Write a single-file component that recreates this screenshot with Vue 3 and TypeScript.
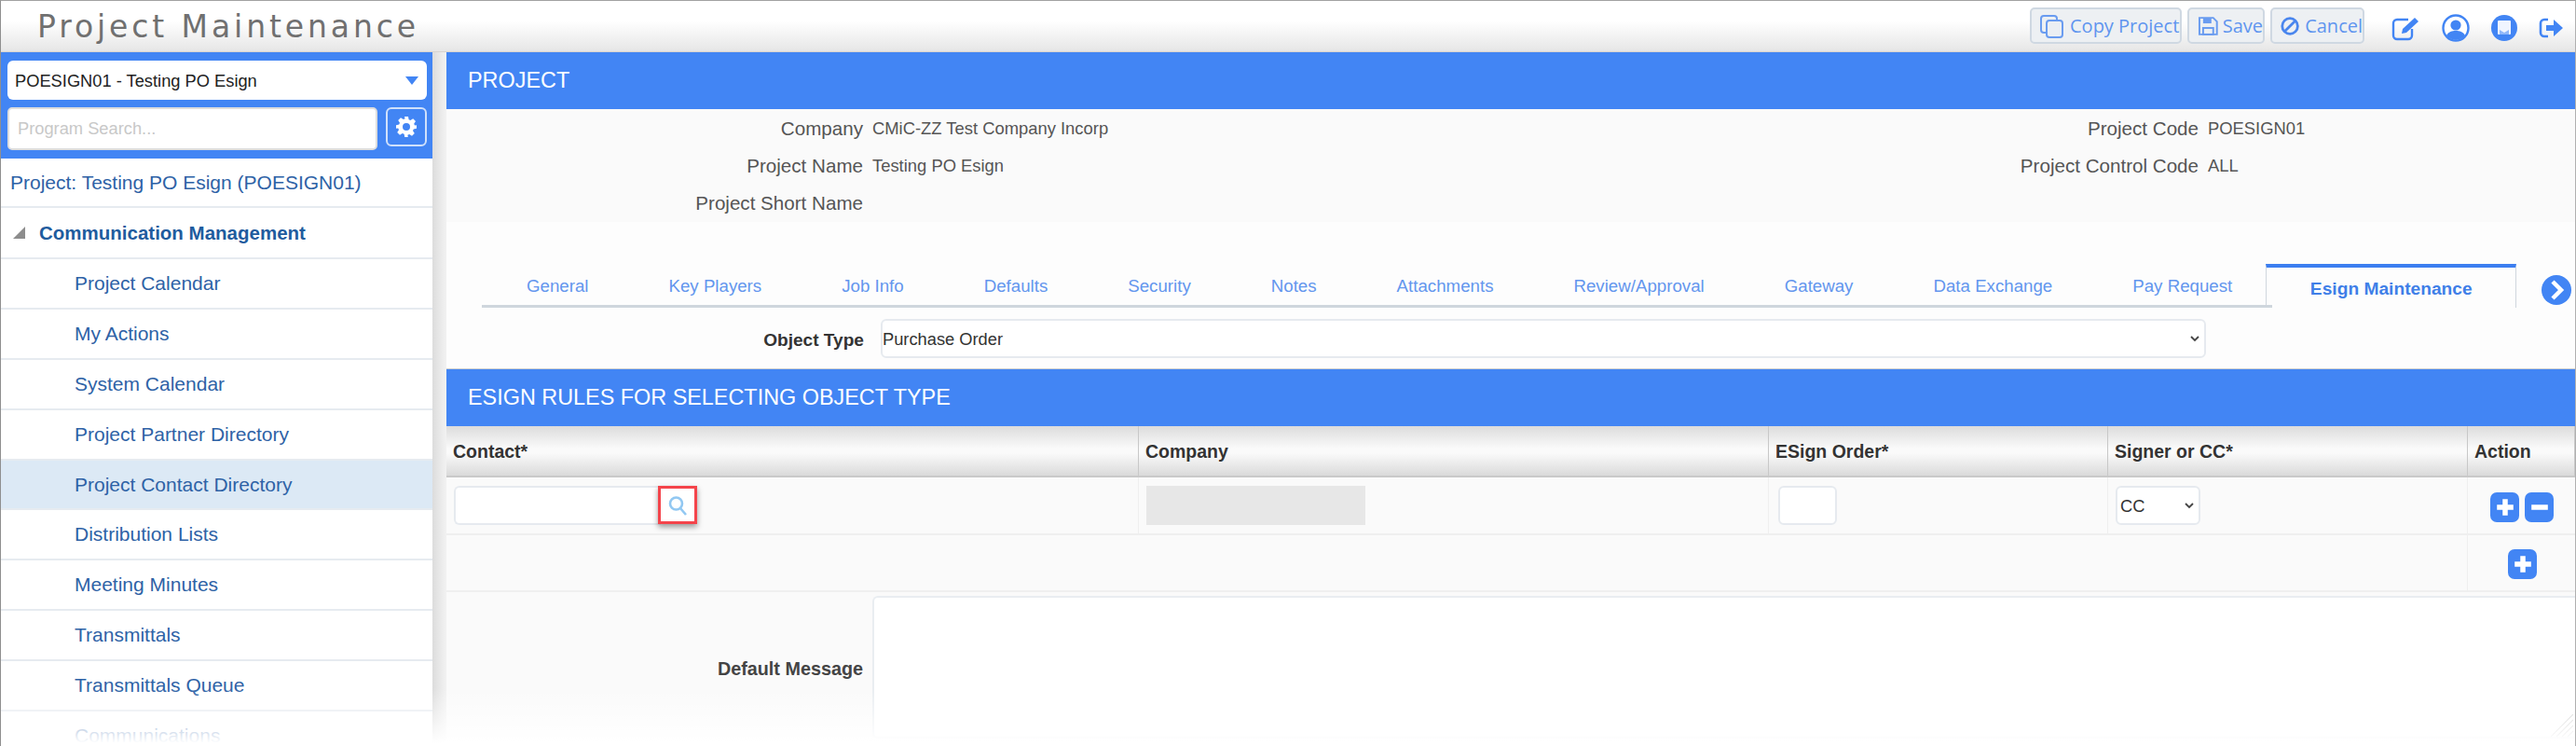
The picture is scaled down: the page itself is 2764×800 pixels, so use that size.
<script setup lang="ts">
interface Field { label: string; value: string }
const navItems: string[] = [
  'Project Calendar', 'My Actions', 'System Calendar', 'Project Partner Directory',
  'Project Contact Directory', 'Distribution Lists', 'Meeting Minutes', 'Transmittals',
  'Transmittals Queue', 'Communications'
]
const tabs: string[] = [
  'General', 'Key Players', 'Job Info', 'Defaults', 'Security', 'Notes', 'Attachments',
  'Review/Approval', 'Gateway', 'Data Exchange', 'Pay Request'
]
const left: Field[] = [
  { label: 'Company', value: 'CMiC-ZZ Test Company Incorp' },
  { label: 'Project Name', value: 'Testing PO Esign' },
  { label: 'Project Short Name', value: '' }
]
const right: Field[] = [
  { label: 'Project Code', value: 'POESIGN01' },
  { label: 'Project Control Code', value: 'ALL' },
  { label: '', value: '' }
]
const infoRows = left.map((f, i) => ({ a: f, b: right[i] }))
const columns: string[] = ['Contact*', 'Company', 'ESign Order*', 'Signer or CC*', 'Action']
</script>

<template>
  <div class="app">
    <header class="topbar">
      <h1 class="title">Project Maintenance</h1>
      <div class="actions">
        <button class="btn copy">
          <svg width="28" height="28" viewBox="0 0 28 28" fill="none" stroke="#6a9cf0" stroke-width="2"><rect x="2" y="3" width="17" height="18" rx="3"/><rect x="8" y="8" width="17" height="18" rx="3" fill="#eceff3"/></svg>
          Copy Project
        </button>
        <button class="btn save">
          <svg width="24" height="24" viewBox="0 0 24 24" fill="none" stroke="#6a9cf0" stroke-width="2"><path d="M3 3h15l4 4v14H3z"/><rect x="7" y="3" width="9" height="6" fill="#6a9cf0" stroke="none"/><rect x="7" y="14" width="11" height="7"/></svg>
          Save
        </button>
        <button class="btn cancel">
          <svg width="24" height="24" viewBox="0 0 24 24" fill="none" stroke="#4a86ee" stroke-width="3"><circle cx="12" cy="12" r="9"/><path d="M6 18 18 6"/></svg>
          Cancel
        </button>
        <div class="tools">
          <svg width="32" height="28" viewBox="0 0 32 28" fill="none" stroke="#4285f4" stroke-width="2.4"><path d="M22 15v7a4 4 0 0 1-4 4H6a4 4 0 0 1-4-4V9a4 4 0 0 1 4-4h12"/><path d="M11 20l1-5L25 3l4 4-13 12z" fill="#4285f4" stroke="none"/></svg>
          <svg width="30" height="30" viewBox="0 0 30 30"><circle cx="15" cy="15" r="13.5" fill="#fff" stroke="#4285f4" stroke-width="2.4"/><circle cx="15" cy="12" r="5.6" fill="#4285f4"/><path d="M5 23c2-4 6-5 10-5s8 1 10 5a13 13 0 0 1-20 0z" fill="#4285f4"/></svg>
          <svg width="30" height="30" viewBox="0 0 30 30"><circle cx="15" cy="15" r="14" fill="#4285f4"/><rect x="8" y="7" width="14" height="15" rx="1" fill="#fff" opacity=".92"/><path d="M10 17l5 3 5-3v5H10z" fill="#4285f4" opacity=".55"/></svg>
          <svg width="28" height="24" viewBox="0 0 28 24"><path d="M10 3H6a4 4 0 0 0-4 4v10a4 4 0 0 0 4 4h4" fill="none" stroke="#4285f4" stroke-width="2.6"/><path d="M8 9h8V3l10 9-10 9v-6H8z" fill="#4285f4"/></svg>
        </div>
      </div>
    </header>

    <div class="body">
      <aside class="sidebar">
        <div class="side-top">
          <div class="project-select">
            <select class="plain-select">
              <option>POESIGN01 - Testing PO Esign</option>
            </select>
            <svg class="caret" width="14" height="9" viewBox="0 0 14 9"><path d="M0 0h14L7 9z" fill="#4285f4"/></svg>
          </div>
          <div class="search-row">
            <input class="search" placeholder="Program Search..." />
            <button class="gear" aria-label="Settings">
              <svg width="24" height="24" viewBox="0 0 24 24"><path fill-rule="evenodd" fill="#fff" d="M10 1h4l.6 3.2 1.8.8 2.8-1.8 2.8 2.8-1.8 2.8.8 1.8L23 10.200v3.600l-3.200.6-.8 1.800 1.800 2.800-2.800 2.800-2.800-1.800-1.800.8L13.800 23h-3.600l-.6-3.200-1.800-.8-2.800 1.800-2.800-2.800 1.800-2.800-.8-1.800L1 13.800v-3.600l3.200-.6.8-1.800-1.800-2.800 2.800-2.800 2.800 1.800 1.800-.8zM12 8a4 4 0 1 0 0 8 4 4 0 0 0 0-8z"/></svg>
            </button>
          </div>
        </div>
        <nav class="nav">
          <div class="nav-project">Project: Testing PO Esign (POESIGN01)</div>
          <div class="nav-group">
            <svg width="13" height="13" viewBox="0 0 13 13"><path d="M13 0v13H0z" fill="#8d8d8d"/></svg>
            Communication Management
          </div>
          <div
            v-for="item in navItems"
            :key="item"
            class="nav-item"
            :class="{ selected: item === 'Project Contact Directory' }"
          >{{ item }}</div>
        </nav>
      </aside>

      <div class="gutter"></div>

      <main class="main">
        <div class="bar">PROJECT</div>

        <section class="info">
          <template v-for="row in infoRows" :key="row.a.label">
            <div class="lbl">{{ row.a.label }}</div>
            <div class="val">{{ row.a.value }}</div>
            <div class="lbl">{{ row.b.label }}</div>
            <div class="val">{{ row.b.value }}</div>
          </template>
        </section>

        <div class="tabs-wrap">
          <div class="tabs">
            <a v-for="t in tabs" :key="t" class="tab">{{ t }}</a>
            <a class="tab active">Esign Maintenance</a>
          </div>
          <svg class="next" width="32" height="32" viewBox="0 0 32 32"><circle cx="16" cy="16" r="16" fill="#4285f4"/><path d="M12 7l9 9-9 9" fill="none" stroke="#fff" stroke-width="4.500"/></svg>
        </div>

        <div class="object-row">
          <label class="obj-label">Object Type</label>
          <div class="obj-field">
            <select class="plain-select boxed">
              <option>Purchase Order</option>
            </select>
            <svg class="chev" width="10" height="7" viewBox="0 0 10 7"><path d="M1 1l4 4 4-4" fill="none" stroke="#444" stroke-width="1.800"/></svg>
          </div>
        </div>

        <div class="bar second">ESIGN RULES FOR SELECTING OBJECT TYPE</div>

        <div class="table">
          <div v-for="c in columns" :key="c" class="th">{{ c }}</div>

          <div class="td">
            <div class="contact">
              <input class="input contact-input" />
              <button class="lookup" aria-label="Search contact">
                <svg width="22" height="24" viewBox="0 0 22 24" fill="none" stroke="#92c8f2" stroke-width="2.600"><circle cx="9.500" cy="10" r="6.500"/><path d="M14 15l6 7"/></svg>
              </button>
            </div>
          </div>
          <div class="td"><div class="disabled"></div></div>
          <div class="td"><input class="input order" /></div>
          <div class="td">
            <div class="cc-field">
              <select class="plain-select boxed cc">
                <option>CC</option>
              </select>
              <svg class="chev" width="10" height="7" viewBox="0 0 10 7"><path d="M1 1l4 4 4-4" fill="none" stroke="#444" stroke-width="1.800"/></svg>
            </div>
          </div>
          <div class="td action">
            <button class="sq" aria-label="Add"><svg width="22" height="22" viewBox="0 0 20 20"><path d="M7.500 2h5v5.500H18v5h-5.500V18h-5v-5.500H2v-5h5.500z" fill="#fff"/></svg></button>
            <button class="sq" aria-label="Remove"><svg width="22" height="22" viewBox="0 0 20 20"><rect x="2" y="7.500" width="16" height="5" fill="#fff"/></svg></button>
          </div>

          <div class="td span4"></div>
          <div class="td action last">
            <button class="sq" aria-label="Add row"><svg width="22" height="22" viewBox="0 0 20 20"><path d="M7.500 2h5v5.500H18v5h-5.500V18h-5v-5.500H2v-5h5.500z" fill="#fff"/></svg></button>
          </div>
        </div>

        <div class="message">
          <label class="msg-label">Default Message</label>
          <div class="msg-box">
            <textarea class="msg-input"></textarea>
            <svg class="grip" width="24" height="24" viewBox="0 0 24 24" stroke="#c9c9c9" stroke-width="1.200"><path d="M24 0 0 24M24 6 6 24M24 12 12 24M24 18l-6 6"/></svg>
          </div>
        </div>
      </main>
    </div>

    <div class="fade"></div>
  </div>
</template>

<style>
html, body { margin: 0; background: #fff; }
</style>

<style scoped>
* { box-sizing: border-box; }
.app {
  position: relative;
  width: 2764px;
  height: 800px;
  overflow: hidden;
  display: flex;
  flex-direction: column;
  font-family: "Liberation Sans", Arial, sans-serif;
  border-top: 1px solid #a2a2a2;
  border-left: 1px solid #8f8f8f;
  border-right: 1px solid #b0b0b0;
  background: #fdfdfd;
}
.topbar {
  height: 55px;
  flex: none;
  display: flex;
  align-items: flex-start;
  justify-content: space-between;
  padding: 0 0 0 39px;
  background: linear-gradient(#fff 0%, #fff 40%, #e6e6e6 100%);
  border-bottom: 1px solid #d8d4d0;
}
.title {
  margin: 9px 0 0;
  font-family: "DejaVu Sans", sans-serif;
  font-weight: 400;
  font-size: 33px;
  line-height: 38px;
  letter-spacing: 3.9px;
  color: #707070;
}
.actions {
  display: flex;
  align-items: flex-start;
  gap: 6px;
  padding: 7px 11px 0 0;
}
.btn {
  height: 39px;
  display: flex;
  align-items: center;
  gap: 6px;
  padding: 0 0 0 8px;
  background: #edf0f3;
  border: 2px solid #cfd8e2;
  border-radius: 5px;
  color: #5f95ef;
  font-family: "Open Sans", sans-serif;
  font-size: 20px;
  white-space: nowrap;
}
.copy { width: 163px; gap: 5px; }
.save { width: 83px; gap: 4px; }
.cancel { width: 101px; gap: 5px; }
.tools {
  display: flex;
  align-items: center;
  gap: 22px;
  margin: 7px 0 0 23px;
}
.body {
  flex: 1;
  min-height: 0;
  display: flex;
}
.sidebar {
  width: 463px;
  flex: none;
  display: flex;
  flex-direction: column;
  background: #fff;
}
.side-top {
  height: 114px;
  flex: none;
  background: #4285f4;
  padding: 9px 6px 0 7px;
  display: flex;
  flex-direction: column;
  gap: 8px;
}
.project-select {
  position: relative;
  height: 42px;
  flex: none;
  background: #fff;
  border-radius: 6px;
}
.plain-select {
  appearance: none;
  width: 100%;
  height: 100%;
  border: 0;
  outline: 0;
  background: transparent;
  font-family: "Liberation Sans", Arial, sans-serif;
  font-size: 18.300px;
  color: #222;
  padding: 0 8px;
}
.caret {
  position: absolute;
  right: 9px;
  top: 17px;
}
.search-row {
  display: flex;
  gap: 9px;
  align-items: flex-start;
  flex: none;
}
.search {
  width: 397px;
  height: 46px;
  border: 2px solid #ddd;
  border-radius: 5px;
  padding: 0 9px;
  font-family: "Liberation Sans", Arial, sans-serif;
  font-size: 18.300px;
  background: #fff;
  outline: 0;
}
.search::placeholder { color: #c8c8c8; opacity: 1; }
.gear {
  width: 44px;
  height: 42px;
  background: #4285f4;
  border: 2px solid #cfe0fb;
  border-radius: 6px;
  padding: 0;
  display: flex;
  align-items: center;
  justify-content: center;
}
.nav { flex: 1; }
.nav-project, .nav-group, .nav-item {
  display: flex;
  align-items: center;
  border-bottom: 2px solid #e6ebf0;
  color: #2e62a6;
  font-size: 21px;
  white-space: nowrap;
}
.nav-project {
  height: 53px;
  padding-left: 10px;
}
.nav-group {
  height: 55px;
  padding-left: 13px;
  gap: 15px;
  font-weight: 700;
  font-size: 20.500px;
  color: #1f5c9e;
}
.nav-item {
  height: 53.900px;
  padding-left: 79px;
}
.nav-item.selected { background: #dce9f5; }
.gutter {
  width: 15px;
  flex: none;
  background: linear-gradient(90deg, #dcdcdc, #eaeaea 60%, #f2f2f2);
}
.main {
  flex: 1;
  min-width: 0;
  display: flex;
  flex-direction: column;
  background: #fdfdfd;
}
.bar {
  height: 61px;
  flex: none;
  display: flex;
  align-items: center;
  padding-left: 23px;
  background: #4285f4;
  color: #fff;
  font-size: 23.400px;
}
.bar.second { height: 62px; border-top: 1px solid #cfcfcf; }
.info {
  height: 121px;
  flex: none;
  display: grid;
  grid-template-columns: 447px 700px 713px 1fr;
  column-gap: 10px;
  grid-auto-rows: 40px;
  align-items: center;
  padding-top: 1px;
  background: #fafafa;
}
.lbl {
  text-align: right;
  font-size: 20.600px;
  color: #555;
  white-space: nowrap;
}
.val {
  font-size: 18.400px;
  color: #555;
  white-space: nowrap;
}
.tabs-wrap {
  height: 92px;
  flex: none;
  display: flex;
  align-items: flex-end;
  padding-left: 38px;
}
.tabs {
  display: flex;
  align-items: flex-end;
  height: 47px;
}
.tab {
  height: 47px;
  display: flex;
  align-items: center;
  padding: 3px 43px 0;
  font-size: 18.700px;
  color: #6396ee;
  border-bottom: 3px solid #cfd6dd;
  white-space: nowrap;
}
.tab:first-child { padding-left: 48px; }
.tab.active {
  width: 269px;
  justify-content: center;
  margin-left: -7px;
  padding: 3px 0 0;
  font-weight: 700;
  font-size: 19.200px;
  color: #3f7fe8;
  border: 1px solid #cfd6dd;
  border-top: 4px solid #3c7ef0;
  border-bottom: 0;
}
.next {
  flex: none;
  margin: 0 0 3px 27px;
}
.object-row {
  height: 65px;
  flex: none;
  display: flex;
  align-items: flex-start;
}
.obj-label {
  width: 448px;
  padding-top: 24px;
  text-align: right;
  font-weight: 700;
  font-size: 19.100px;
  color: #333;
}
.obj-field {
  position: relative;
  margin: 12px 0 0 18px;
  width: 1422px;
  height: 42px;
}
.boxed {
  border: 2px solid #e6eaef;
  border-radius: 6px;
  background: #fff;
  font-size: 18.300px;
  color: #333;
}
.obj-field .boxed { padding-left: 0; }
.chev {
  position: absolute;
  right: 7px;
  top: 18px;
}
.table {
  display: grid;
  grid-template-columns: 743px 676px 364px 386px 1fr;
  flex: none;
}
.th {
  height: 55px;
  display: flex;
  align-items: center;
  padding: 2px 0 0 7px;
  font-weight: 700;
  font-size: 19.500px;
  color: #333;
  background: linear-gradient(#dcdcdc, #fafafa 45%, #fafafa 55%, #dadada);
  border-right: 1px solid #c8c8c8;
  border-bottom: 2px solid #c9c9c9;
}
.th:last-child { border-right: 0; padding-left: 8px; }
.td {
  height: 62px;
  background: #fafafa;
  border-right: 1px solid #efefef;
  border-bottom: 2px solid #efefef;
  padding: 9px 0 0 8px;
}
.span4 { grid-column: span 4; height: 61px; border-right: 1px solid #efefef; }
.last { height: 61px; }
.input {
  height: 42px;
  border: 2px solid #e6eaef;
  border-radius: 6px;
  background: #fff;
  outline: 0;
}
.contact {
  display: flex;
}
.contact-input {
  width: 222px;
  border-right: 0;
  border-radius: 6px 0 0 6px;
}
.lookup {
  width: 42px;
  height: 41px;
  background: #fff;
  border: 3px solid #f4444b;
  padding: 0;
  margin-left: -3px;
  display: flex;
  align-items: center;
  justify-content: center;
  box-shadow: 0 3px 6px rgba(0, 0, 0, .4);
}
.disabled {
  width: 235px;
  height: 42px;
  background: #e7e7e7;
}
.order { width: 63px; margin-left: 2px; }
.cc-field {
  position: relative;
  width: 91px;
  height: 42px;
}
.cc { padding-left: 3px; }
.action {
  display: flex;
  gap: 6px;
  padding: 16px 0 0 24px;
  border-right: 0;
}
.action.last { padding: 15px 0 0 43px; }
.sq {
  width: 31px;
  height: 32px;
  padding: 0;
  border: 0;
  border-radius: 7px;
  background: #4285f4;
  display: flex;
  align-items: center;
  justify-content: center;
}
.message {
  flex: 1;
  display: flex;
  align-items: flex-start;
  background: #fafafa;
}
.msg-label {
  width: 447px;
  flex: none;
  padding-top: 71px;
  text-align: right;
  font-weight: 700;
  font-size: 19.800px;
  color: #444;
}
.msg-box {
  position: relative;
  margin: 4px 0 0 10px;
  flex: 1;
  height: 153px;
}
.msg-input {
  display: block;
  width: 100%;
  height: 100%;
  border: 2px solid #e9edf1;
  border-right: 0;
  border-radius: 6px 0 0 6px;
  background: #fff;
  outline: 0;
  resize: none;
}
.grip {
  position: absolute;
  right: 2px;
  bottom: 2px;
}
.fade {
  position: absolute;
  left: 0;
  right: 0;
  bottom: 0;
  height: 62px;
  pointer-events: none;
  background: linear-gradient(rgba(255, 255, 255, 0), #fff 95%);
}
</style>
